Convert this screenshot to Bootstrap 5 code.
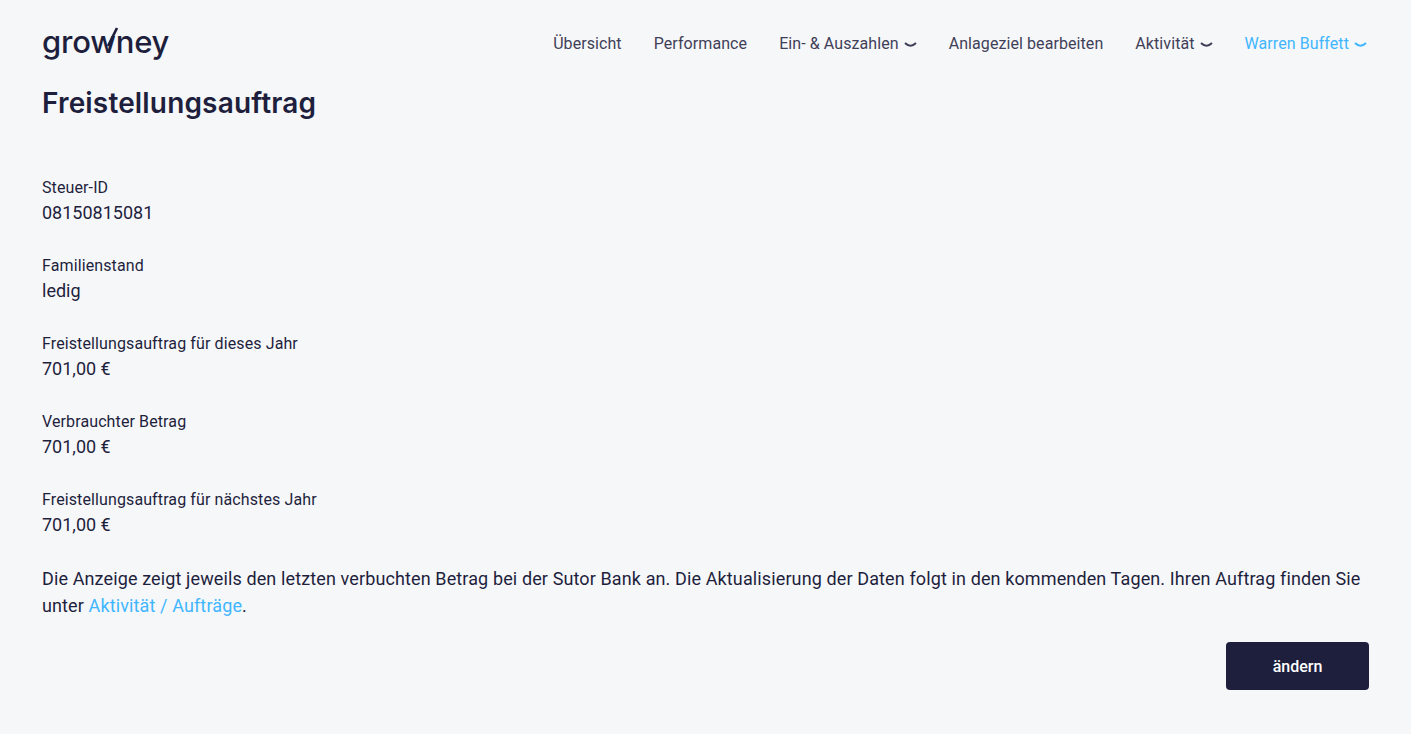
<!DOCTYPE html>
<html lang="de">
<head>
<meta charset="utf-8">
<title>Freistellungsauftrag</title>
<link href="https://cdn.jsdelivr.net/npm/bootstrap@5.3.0/dist/css/bootstrap.min.css" rel="stylesheet">
<style>
body{background:#f6f7f9;color:#1e1f3d;font-family:Roboto,sans-serif;font-size:18px;line-height:27px;letter-spacing:.12px}
.shell{padding:0 42px}
.topbar{height:86px;padding-top:1px}
.brand{font-family:Inter,sans-serif;font-size:31px;line-height:40px;font-weight:500;color:#1e1f3d;letter-spacing:-.2px;text-decoration:none;position:relative;display:inline-block;height:40px;margin-top:-3px}
.brand svg{position:absolute;left:63px;top:5px}
.menu{gap:32px;font-size:16px;line-height:24px;margin-right:2px;letter-spacing:.08px}
.menu a{color:#3f4058;text-decoration:none;display:flex;align-items:center;gap:5px}
.menu a.who{color:#3fb6ff}
.menu svg{display:block;margin-top:2px}
h1.title{font-family:Inter,sans-serif;font-weight:600;font-size:28px;line-height:36px;letter-spacing:.16px;margin:-1px 0 55px;color:#1e1f3d}
.fact{margin-bottom:28px}
.fact .lbl{font-size:16px;line-height:24px;letter-spacing:.11px}
.fact .val{font-size:18px;line-height:27px;letter-spacing:0;margin-top:-1px}
.note{margin:-1px 0 0;line-height:27px}
.note a{color:#3fb6ff;text-decoration:none}
.go{background:#1e1f3d;color:#fff;width:143px;height:48px;border:0;border-radius:4px;font-size:16px;font-weight:500;margin-top:23px;padding-top:8px;padding-bottom:6px}
.go:hover{background:#1e1f3d;color:#fff}
</style>
</head>
<body>
<div class="shell">
<nav class="topbar d-flex justify-content-between align-items-center">
<a class="brand" href="#">growney<svg width="14" height="20" viewBox="0 0 14 20"><path d="M3 19 L12 1" fill="none" stroke="#1e1f3d" stroke-width="2.6"/></svg></a>
<div class="menu d-flex align-items-center">
<a href="#">Übersicht</a>
<a href="#">Performance</a>
<a href="#">Ein- &amp; Auszahlen <svg width="13" height="6" viewBox="0 0 13 6"><path d="M1 1 Q6.5 6.4 12 1" fill="none" stroke="#3f4058" stroke-width="2"/></svg></a>
<a href="#">Anlageziel bearbeiten</a>
<a href="#">Aktivität <svg width="13" height="6" viewBox="0 0 13 6"><path d="M1 1 Q6.5 6.4 12 1" fill="none" stroke="#3f4058" stroke-width="2"/></svg></a>
<a class="who" href="#">Warren Buffett <svg width="13" height="6" viewBox="0 0 13 6"><path d="M1 1 Q6.5 6.4 12 1" fill="none" stroke="#3fb6ff" stroke-width="2"/></svg></a>
</div>
</nav>
<h1 class="title">Freistellungsauftrag</h1>
<div class="fact"><div class="lbl">Steuer-ID</div><div class="val">08150815081</div></div>
<div class="fact"><div class="lbl">Familienstand</div><div class="val">ledig</div></div>
<div class="fact"><div class="lbl">Freistellungsauftrag für dieses Jahr</div><div class="val">701,00 €</div></div>
<div class="fact"><div class="lbl">Verbrauchter Betrag</div><div class="val">701,00 €</div></div>
<div class="fact"><div class="lbl">Freistellungsauftrag für nächstes Jahr</div><div class="val">701,00 €</div></div>
<p class="note">Die Anzeige zeigt jeweils den letzten verbuchten Betrag bei der Sutor Bank an. Die Aktualisierung der Daten folgt in den kommenden Tagen. Ihren Auftrag finden Sie unter <a href="#">Aktivität / Aufträge</a>.</p>
<div class="d-flex justify-content-end"><button class="btn go">ändern</button></div>
</div>
<script src="https://cdn.jsdelivr.net/npm/bootstrap@5.3.0/dist/js/bootstrap.bundle.min.js"></script>
</body>
</html>
